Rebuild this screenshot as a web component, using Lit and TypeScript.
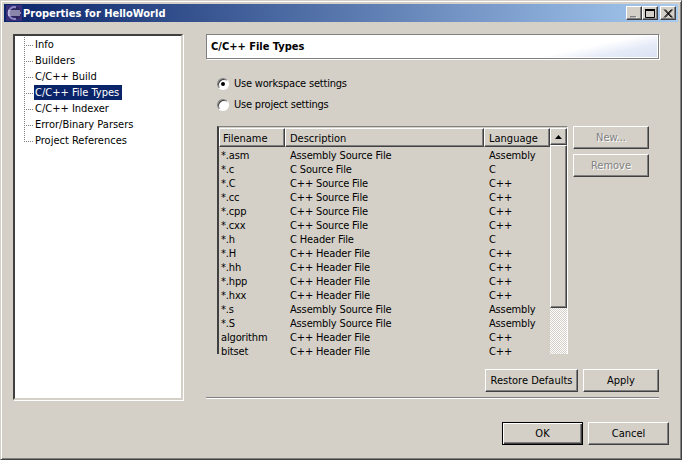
import { LitElement, html, css } from "lit";
import { customElement } from "lit/decorators.js";

const TREE = [
  "Info",
  "Builders",
  "C/C++ Build",
  "C/C++ File Types",
  "C/C++ Indexer",
  "Error/Binary Parsers",
  "Project References",
];

const ROWS: Array<[string, string, string]> = [
  ["*.asm", "Assembly Source File", "Assembly"],
  ["*.c", "C Source File", "C"],
  ["*.C", "C++ Source File", "C++"],
  ["*.cc", "C++ Source File", "C++"],
  ["*.cpp", "C++ Source File", "C++"],
  ["*.cxx", "C++ Source File", "C++"],
  ["*.h", "C Header File", "C"],
  ["*.H", "C++ Header File", "C++"],
  ["*.hh", "C++ Header File", "C++"],
  ["*.hpp", "C++ Header File", "C++"],
  ["*.hxx", "C++ Header File", "C++"],
  ["*.s", "Assembly Source File", "Assembly"],
  ["*.S", "Assembly Source File", "Assembly"],
  ["algorithm", "C++ Header File", "C++"],
  ["bitset", "C++ Header File", "C++"],
];

@customElement("app-root")
export class AppRoot extends LitElement {
  static styles = css`
    :host {
      display: block;
      width: 682px;
      height: 460px;
      overflow: hidden;
      background: #d4d0c8;
      color: #000;
      font-family: "DejaVu Sans Condensed", "DejaVu Sans", sans-serif;
      font-size: 11px;
    }
    .window {
      box-sizing: border-box;
      width: 682px;
      height: 460px;
      display: flex;
      flex-direction: column;
      padding: 2px;
      border: 1px solid;
      border-color: #d4d0c8 #404040 #404040 #d4d0c8;
      box-shadow: inset 1px 1px 0 #fff, inset -1px -1px 0 #808080;
    }
    .titlebar {
      height: 18px;
      margin: 1px 1px 0 1px;
      flex: none;
      display: flex;
      align-items: center;
      gap: 1px;
      padding: 0 2px;
      background: linear-gradient(to right, #0a246a, #a6caf0);
      color: #fff;
      font-weight: bold;
      font-size: 11px;
    }
    .title-icon {
      width: 16px;
      height: 16px;
      flex: none;
    }
    .title-text {
      flex: 1;
    }
    .caption-btns {
      display: flex;
      align-items: center;
    }
    .cap {
      box-sizing: border-box;
      width: 16px;
      height: 14px;
      background: #d4d0c8;
      border: 1px solid;
      border-color: #fff #404040 #404040 #fff;
      box-shadow: inset -1px -1px 0 #808080;
      display: flex;
      align-items: center;
      justify-content: center;
    }
    .cap.close {
      margin-left: 2px;
    }
    .cap svg {
      display: block;
    }
    .content {
      flex: 1;
      display: flex;
      padding: 12px 0 0 10px;
      min-height: 0;
    }
    .tree {
      box-sizing: border-box;
      width: 170px;
      height: 366px;
      flex: none;
      background: #fff;
      border: 2px solid;
      border-color: #404040 #d4d0c8 #d4d0c8 #404040;
      box-shadow: 1px 1px 0 #fff;
      padding: 1px 0 0 9px;
    }
    .tree-row {
      display: flex;
      height: 16px;
      align-items: stretch;
    }
    .conn {
      width: 10px;
      flex: none;
      background:
        repeating-linear-gradient(to bottom, #808080 0 1px, transparent 1px 2px) 0 0 / 1px 100% no-repeat,
        repeating-linear-gradient(to right, #808080 0 1px, transparent 1px 2px) 0 50% / 100% 1px no-repeat;
    }
    .conn.last {
      background:
        repeating-linear-gradient(to bottom, #808080 0 1px, transparent 1px 2px) 0 0 / 1px 50% no-repeat,
        repeating-linear-gradient(to right, #808080 0 1px, transparent 1px 2px) 0 50% / 100% 1px no-repeat;
    }
    .tree-label {
      padding: 0 1px;
      line-height: 15px;
      height: 15px;
      white-space: nowrap;
    }
    .tree-label.sel {
      background: #0a246a;
      color: #fff;
      padding-right: 3px;
    }
    .pane {
      margin-left: 23px;
      width: 453px;
      flex: none;
      display: flex;
      flex-direction: column;
    }
    .heading {
      box-sizing: border-box;
      height: 25px;
      margin-bottom: 1px;
      flex: none;
      display: flex;
      align-items: center;
      padding-left: 4px;
      font-weight: bold;
      font-size: 11px;
      border: 1px solid #808080;
      box-shadow: inset 0 0 0 1px #fff, 1px 1px 0 #fff;
      background: linear-gradient(167.7deg, #fff 78%, #e6ebf8 88%, #dae1f3 100%);
    }
    .radios {
      margin: 17px 0 0 11px;
      display: flex;
      flex-direction: column;
      gap: 8px;
      letter-spacing: -0.2px;
    }
    .radio {
      display: flex;
      align-items: center;
      gap: 5px;
      height: 13px;
    }
    .radio-dot {
      box-sizing: border-box;
      width: 12px;
      height: 12px;
      flex: none;
      border-radius: 50%;
      background: #fff;
      border: 1px solid;
      border-color: #808080 #fff #fff #808080;
      box-shadow: 0 0 0 1px #d4d0c8, inset 1px 1px 0 #404040;
      display: flex;
      align-items: center;
      justify-content: center;
    }
    .radio-dot.on::after {
      content: "";
      width: 4px;
      height: 4px;
      border-radius: 50%;
      background: #000;
    }
    .table-area {
      margin: 15px 0 0 11px;
      display: flex;
      gap: 5px;
    }
    .table {
      box-sizing: border-box;
      width: 351px;
      height: 228px;
      flex: none;
      display: flex;
      border-top: 1px solid #808080;
      border-left: 2px solid #404040;
      padding-top: 1px;
      border-right: 1px solid #fff;
    }
    .table-main {
      width: 331px;
      flex: none;
    }
    .head {
      display: grid;
      grid-template-columns: 66px 199px 66px;
      height: 17px;
    }
    .head-cell {
      box-sizing: border-box;
      background: #d4d0c8;
      border: 1px solid;
      border-color: #fff #404040 #404040 #fff;
      box-shadow: inset -1px -1px 0 #808080;
      padding: 2px 0 0 4px;
      line-height: 15px;
    }
    .head-cell:first-child {
      padding-left: 3px;
    }
    .body {
      padding-top: 3px;
    }
    .row {
      display: grid;
      grid-template-columns: 66px 199px 66px;
      height: 14px;
      line-height: 15px;
      letter-spacing: -0.15px;
    }
    .row span {
      padding-left: 2px;
      white-space: nowrap;
    }
    .row span + span {
      padding-left: 5px;
    }
    .scroll {
      width: 17px;
      flex: none;
      display: flex;
      flex-direction: column;
    }
    .arrow,
    .thumb {
      box-sizing: border-box;
      background: #d4d0c8;
      border: 1px solid;
      border-color: #fff #404040 #404040 #fff;
      box-shadow: inset -1px -1px 0 #808080;
    }
    .arrow {
      height: 17px;
      display: flex;
      align-items: center;
      justify-content: center;
    }
    .thumb {
      height: 163px;
    }
    .track {
      flex: 1;
      background: repeating-conic-gradient(#fff 0 25%, #d4d0c8 0 50%) 0 0 / 2px 2px;
    }
    .side {
      display: flex;
      flex-direction: column;
      gap: 5px;
    }
    .btn {
      box-sizing: border-box;
      height: 23px;
      background: #d4d0c8;
      border: 1px solid;
      border-color: #fff #404040 #404040 #fff;
      box-shadow: inset -1px -1px 0 #808080;
      display: flex;
      align-items: center;
      justify-content: center;
      white-space: nowrap;
    }
    .btn.w76 {
      width: 76px;
    }
    .btn.w93 {
      width: 93px;
    }
    .btn.w81 {
      width: 81px;
    }
    .btn.off {
      color: #808080;
      text-shadow: 1px 1px 0 #fff;
    }
    .btn.default {
      border-color: #000;
      box-shadow: inset 1px 1px 0 #fff, inset -1px -1px 0 #404040, inset -2px -2px 0 #808080;
    }
    .pane-actions {
      margin-top: 15px;
      display: flex;
      justify-content: flex-end;
      gap: 5px;
    }
    .sep {
      margin-top: 5px;
      height: 1px;
      background: #808080;
      border-bottom: 1px solid #fff;
      flex: none;
    }
    .footer {
      flex: none;
      display: flex;
      justify-content: flex-end;
      gap: 5px;
      padding: 0 10px 12px 0;
    }
  `;

  private _icon() {
    return html`<svg class="title-icon" viewBox="0 0 16 16">
      <rect width="16" height="16" fill="#3a2f7a" />
      <circle cx="8" cy="8" r="7" fill="#2c2560" />
      <path d="M10 2.2A6 6 0 1 0 10 13.8" fill="none" stroke="#8f88c8" stroke-width="2" />
      <path d="M2 6h12M2 8h13M2 10h12" stroke="#e8e6f6" stroke-width="1" />
    </svg>`;
  }

  render() {
    return html`
      <div class="window">
        <div class="titlebar">
          ${this._icon()}
          <span class="title-text">Properties for HelloWorld</span>
          <div class="caption-btns">
            <div class="cap">
              <svg width="10" height="9" viewBox="0 0 10 9">
                <path d="M2 8h6v1H2z" fill="#fff" />
                <path d="M1 7h6v1.5H1z" fill="#808080" />
              </svg>
            </div>
            <div class="cap">
              <svg width="10" height="9" viewBox="0 0 10 9">
                <path d="M0.5 1.5h9v7h-9z" fill="none" stroke="#000" />
                <rect width="10" height="2" fill="#000" />
              </svg>
            </div>
            <div class="cap close">
              <svg width="10" height="9" viewBox="0 0 10 9">
                <path d="M1 0.5l7.5 8M2.2 0.5l7.5 8M8.5 0.5L1 8.5M9.7 0.5L2.2 8.5" stroke="#000" fill="none" />
              </svg>
            </div>
          </div>
        </div>
        <div class="content">
          <div class="tree">
            ${TREE.map(
              (t, i) => html`<div class="tree-row">
                <span class="conn ${i === TREE.length - 1 ? "last" : ""}"></span>
                <span class="tree-label ${i === 3 ? "sel" : ""}">${t}</span>
              </div>`,
            )}
          </div>
          <div class="pane">
            <div class="heading">C/C++ File Types</div>
            <div class="radios">
              <div class="radio"><span class="radio-dot on"></span>Use workspace settings</div>
              <div class="radio"><span class="radio-dot"></span>Use project settings</div>
            </div>
            <div class="table-area">
              <div class="table">
                <div class="table-main">
                  <div class="head">
                    <div class="head-cell">Filename</div>
                    <div class="head-cell">Description</div>
                    <div class="head-cell">Language</div>
                  </div>
                  <div class="body">
                    ${ROWS.map(
                      (r) => html`<div class="row"><span>${r[0]}</span><span>${r[1]}</span><span>${r[2]}</span></div>`,
                    )}
                  </div>
                </div>
                <div class="scroll">
                  <div class="arrow">
                    <svg width="7" height="4" viewBox="0 0 7 4"><path d="M3.5 0L7 4H0z" fill="#000" /></svg>
                  </div>
                  <div class="thumb"></div>
                  <div class="track"></div>
                </div>
              </div>
              <div class="side">
                <div class="btn w76 off">New...</div>
                <div class="btn w76 off">Remove</div>
              </div>
            </div>
            <div class="pane-actions">
              <div class="btn w93">Restore Defaults</div>
              <div class="btn w76">Apply</div>
            </div>
            <div class="sep"></div>
          </div>
        </div>
        <div class="footer">
          <div class="btn w81 default">OK</div>
          <div class="btn w81">Cancel</div>
        </div>
      </div>
    `;
  }
}

declare global {
  interface HTMLElementTagNameMap {
    "app-root": AppRoot;
  }
}
